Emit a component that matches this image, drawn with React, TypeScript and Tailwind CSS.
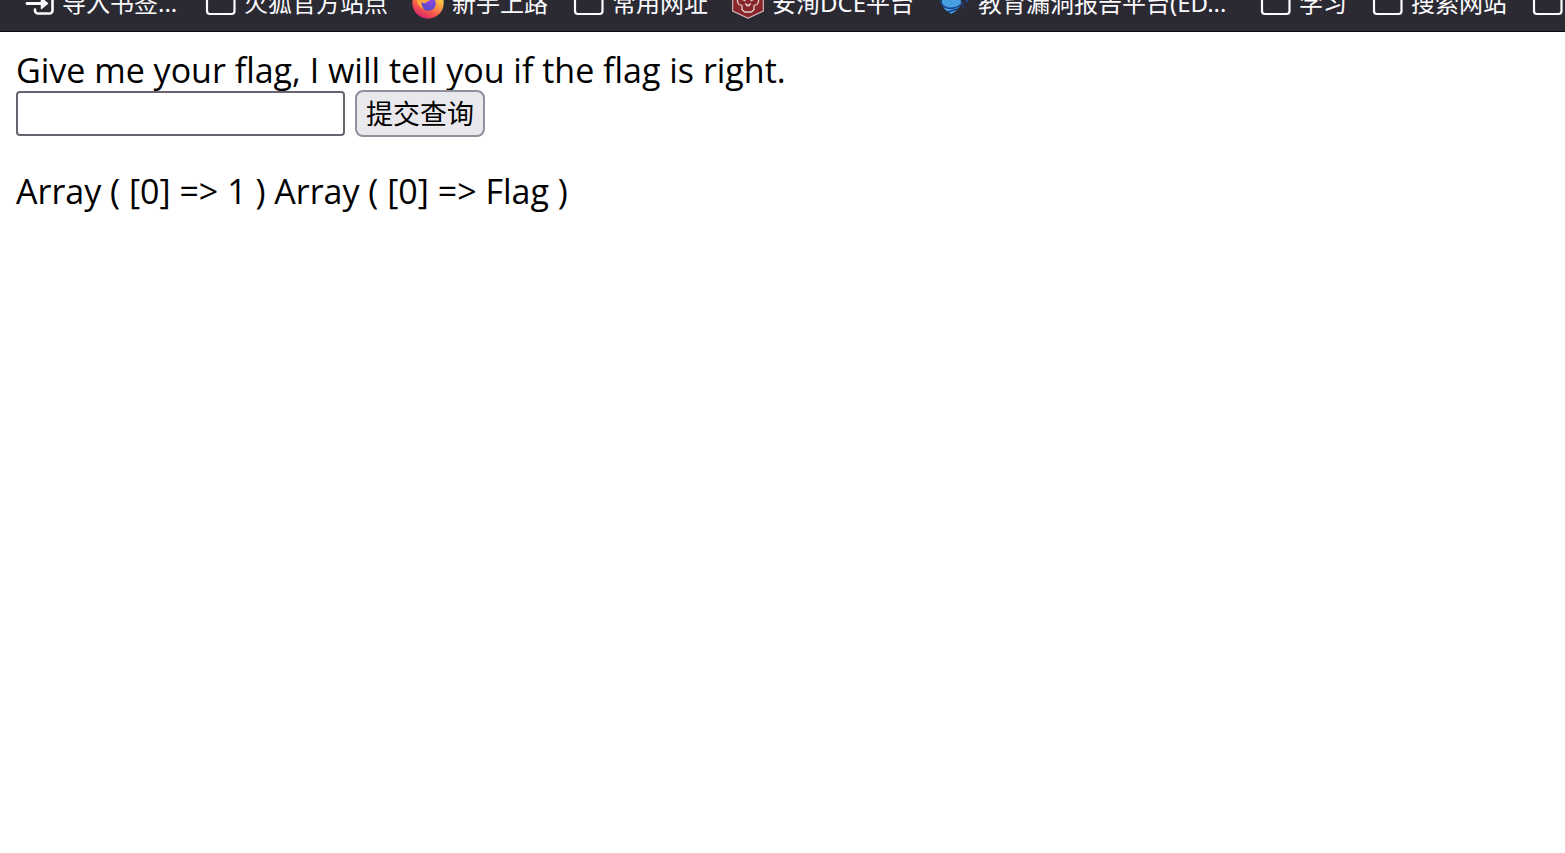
import type { ReactNode } from 'react';

function ImportIcon() {
  return (
    <svg viewBox="0 0 32 32" className="size-8 shrink-0" fill="none" stroke="#fbfbfe" strokeWidth="2.6" strokeLinecap="round" strokeLinejoin="round" aria-hidden="true">
      <path d="M5 16.500h17" strokeWidth="2.800" />
      <path d="M19.500 11.500l6 5-6 5z" fill="#fbfbfe" strokeWidth="1.500" />
      <path d="M13 22.500v1a3 3 0 0 0 3 3h11.500a3 3 0 0 0 3-3V6a3 3 0 0 0-3-3H16a3 3 0 0 0-3 3v3" />
    </svg>
  );
}

function FolderIcon() {
  return (
    <svg viewBox="0 0 32 32" className="size-8 shrink-0" fill="none" stroke="#fbfbfe" strokeWidth="2.2" strokeLinejoin="round" aria-hidden="true">
      <path d="M3 6a3 3 0 0 1 3-3h6l4 4h11.500a3 3 0 0 1 3 3v14a3 3 0 0 1-3 3H6a3 3 0 0 1-3-3z" />
    </svg>
  );
}

function FirefoxIcon() {
  return (
    <svg viewBox="0 0 32 32" className="size-8 shrink-0" aria-hidden="true">
      <defs>
        <linearGradient id="fx-body" x1="0.85" y1="0.1" x2="0.35" y2="1">
          <stop offset="0.15" stopColor="#ffd84a" />
          <stop offset="0.45" stopColor="#fb9a45" />
          <stop offset="0.72" stopColor="#f4584b" />
          <stop offset="1" stopColor="#d8246f" />
        </linearGradient>
        <radialGradient id="fx-globe" cx="0.65" cy="0.25" r="0.8">
          <stop offset="0" stopColor="#9a48e4" />
          <stop offset="1" stopColor="#5249c9" />
        </radialGradient>
      </defs>
      <circle cx="16" cy="16" r="15.700" fill="url(#fx-body)" />
      <circle cx="16.500" cy="16.500" r="7.300" fill="url(#fx-globe)" />
      <path d="M5 11c3-3 7-3 10 0 1.500.4 3 .6 3.500 1.300-.6 1.800-3.800 2-4.200 3.500-2.300.8-3.600.2-4.800-1 0 3 .5 5 2.500 7C8 21 4 17 5 11z" fill="#ffa643" />
    </svg>
  );
}

function ShieldIcon() {
  return (
    <svg viewBox="0 0 32 32" className="size-8 shrink-0" strokeLinejoin="round" aria-hidden="true">
      <path d="M16 .8 31.300 8v16L16 31.300.7 24V8z" fill="#87272b" stroke="#dcc0c2" strokeWidth="1.100" />
      <g fill="none" stroke="#e5cccd" strokeWidth="1.300">
        <path d="M5.500 11v4l1.500 2.500 3 1v4l2.500 2.500h7l2.500-2.500v-4l3-1 1.500-2.500v-4" />
        <path d="M10.500 12.500l3 1.500M21.500 12.500l-3 1.500M13 16.500l3 2 3-2M14 18.500h4" />
      </g>
    </svg>
  );
}

function BirdIcon() {
  return (
    <svg viewBox="0 0 32 32" className="size-8 shrink-0" aria-hidden="true">
      <path d="M4 8c4-5 12-6 17-1l2 7c0 4-1 6-4 8l-1 2-5 3-2-2c-5-2-8-6-7-17z" fill="#459fe0" />
      <path d="M2.500 12c0 5 3 8 7 9 5 1 9 0 13-3M10 25l9-3" fill="none" stroke="#17408c" strokeWidth="1.500" />
      <path d="M23 17.500l2.500-2M28 13l1.500 2M24.500 20.500l1.500-.5" stroke="#1d4998" strokeWidth="2" />
    </svg>
  );
}

type Bookmark = { label: string; icon: ReactNode; width?: string };

const bookmarks: Bookmark[] = [
  { label: '导入书签...', icon: <ImportIcon />, width: 'w-[118px]' },
  { label: '火狐官方站点', icon: <FolderIcon /> },
  { label: '新手上路', icon: <FirefoxIcon /> },
  { label: '常用网址', icon: <FolderIcon /> },
  { label: '安洵DCE平台', icon: <ShieldIcon /> },
  { label: '教育漏洞报告平台(ED...', icon: <BirdIcon />, width: 'w-[257px]' },
  { label: '学习', icon: <FolderIcon /> },
  { label: '搜索网站', icon: <FolderIcon /> },
];

export default function App() {
  return (
    <div className="min-h-screen bg-white font-['Open_Sans','Noto_Sans_CJK_SC',sans-serif] text-black">
      <nav aria-label="Bookmarks" className="flex h-8 items-end overflow-hidden border-b border-[#0c0c0d] bg-[#2b2a33] pb-1 pl-[22px] font-['Noto_Sans','Noto_Sans_CJK_SC',sans-serif]">
        <ul className="flex h-12 items-center gap-6">
          {bookmarks.map(({ label, icon, width }) => (
            <li key={label} className="shrink-0">
              <a href="#" className="flex items-center gap-2 text-2xl whitespace-nowrap text-[#fbfbfe]">
                {icon}
                <span className={width}>{label}</span>
              </a>
            </li>
          ))}
          <li className="shrink-0">
            <a href="#" aria-label="Folder" className="block">
              <FolderIcon />
            </a>
          </li>
        </ul>
      </nav>
      <main className="px-4 pt-[18px] text-[34px] leading-10">
        <form onSubmit={(event) => event.preventDefault()}>
          <label htmlFor="flag" className="block">
            Give me your flag, I will tell you if the flag is right.
          </label>
          <div className="flex items-center gap-2.5">
            <input id="flag" type="text" className="h-[45px] w-[329px] rounded-sm border-2 border-[#67646f] bg-white px-1 text-[27px]" />
            <button type="submit" className="h-[47px] rounded-lg border-2 border-[#8f8f9d] bg-[#e9e9ed] px-[9px] text-[27px] leading-10">
              提交查询
            </button>
          </div>
        </form>
        <p className="mt-[34px]">Array ( [0] =&gt; 1 ) Array ( [0] =&gt; Flag )</p>
      </main>
    </div>
  );
}
